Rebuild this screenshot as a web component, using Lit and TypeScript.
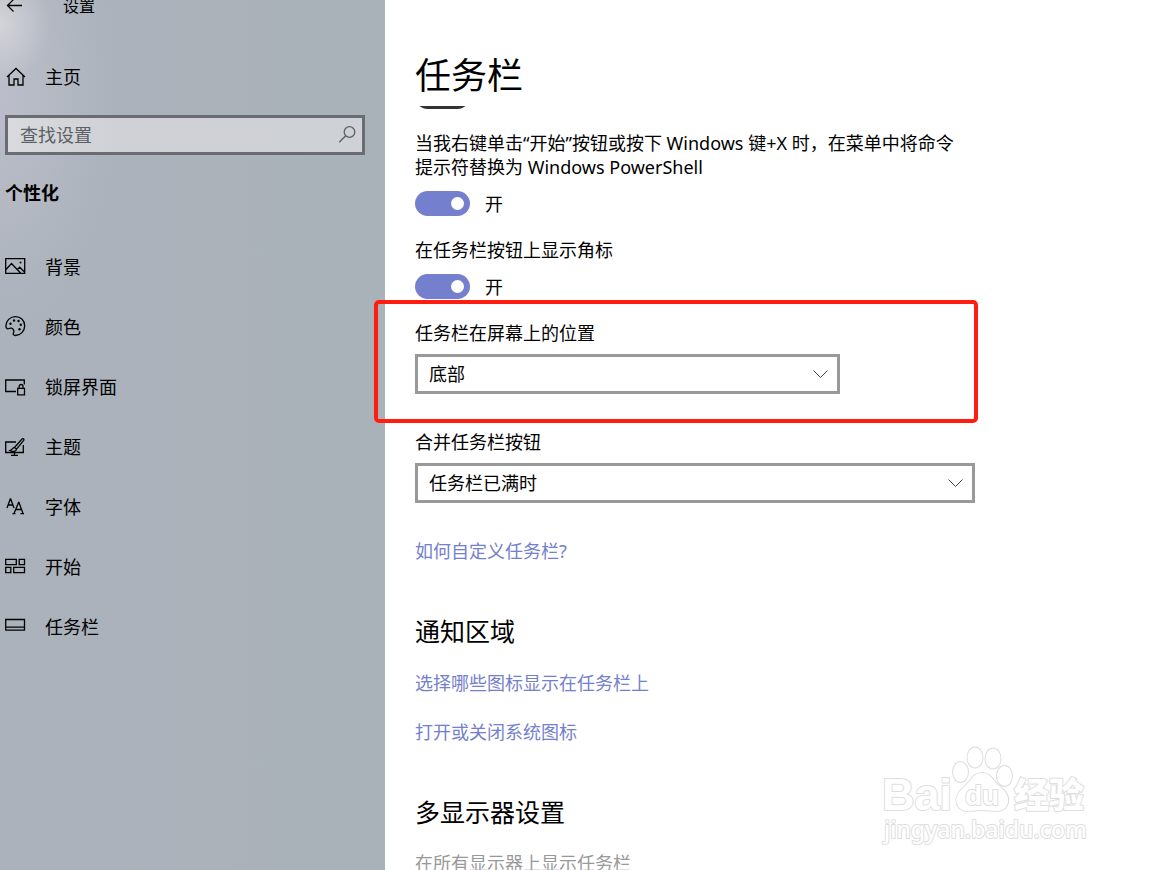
import { LitElement, html, css, svg, nothing } from "lit";
import { customElement, property } from "lit/decorators.js";

const icons: Record<string, unknown> = {
  back: svg`<path d="M2.500 10.500H17M8.500 4.500 2.500 10.500l6 6" />`,
  home: svg`<path d="M2 11 11 2.500 20 11M4 9.500V19H9V13H13V19H18V9.500" />`,
  picture: svg`<path d="M.7 2.700H19.700V17.300H.7ZM1 13.500 6.500 7.500 15.500 17M12.500 13.500 14.700 11.200 19.500 16" /><circle cx="15.500" cy="6.500" r=".4" />`,
  palette: svg`<path d="M1 10.500C.5 4.500 5.500 .7 10.500 .7 15.800 .7 19.700 4.500 19.700 9.700 19.700 15 15.500 19.500 10.500 19.500 8.500 19.500 7.800 18.300 8.500 16.800 9.200 15 8.500 13 6.500 12.200 4.500 11.600 3.500 13.300 2.200 12.700 1.400 12.300 1 11.500 1 10.500Z" /><g class="dots"><circle cx="5.500" cy="7.800" r="1.200" /><circle cx="9" cy="4.500" r="1.200" /><circle cx="13.500" cy="5" r="1.200" /><circle cx="15.800" cy="8.800" r="1.200" /><circle cx="14.500" cy="13.300" r="1.200" /></g>`,
  lock: svg`<path d="M11 15.500H.7V4H19.300V8.500M12.700 12.300H19.500V18.900H12.700ZM14.200 12V10.400A1.900 1.900 0 0 1 18 10.400V12" />`,
  theme: svg`<path d="M11 6H.7V16.500H18.300V9M9.500 16.500V19.300M6 19.300H13M9.500 11.500 17 3C18 2 19.500 3.200 18.700 4.400L11.500 13.200ZM9.500 11.500C7.500 11.300 7.300 14 5 14.500 7.500 16 11.200 15.800 11.500 13.200" />`,
  fonts: svg`<path d="M2 12 5.300 3H5.700L9 12M3.300 9H7.800M9 17.500 13.600 6.500H14L18 17.500M10.700 13.500H16.500M7.500 17.700H10.500M15.500 17.700H19" />`,
  start: svg`<path d="M.7 3.300H11.300V8.600H.7ZM14.200 3.300H19.500V8.600H14.200ZM.7 11.400H5.800V16.600H.7ZM8.700 11.400H19.500V16.600H8.700Z" />`,
  taskbar: svg`<path d="M.7 3.500H19.500V14.200H.7ZM.7 11.200H19.500" />`,
  search: svg`<circle cx="12.500" cy="8" r="5.300" /><path d="M8.700 11.800 2.200 18.300" />`,
};

@customElement("ui-icon")
class UiIcon extends LitElement {
  @property() name = "home";
  static styles = css`
    :host { display: block; flex: none; width: 22px; height: 22px; }
    svg { display: block; width: 100%; height: 100%; fill: none; stroke: currentColor; stroke-width: 1.3; }
    .dots { fill: currentColor; stroke: none; }
  `;
  render() {
    return html`<svg viewBox="0 0 22 22" aria-hidden="true">${icons[this.name]}</svg>`;
  }
}

@customElement("drop-down")
class DropDown extends LitElement {
  @property() label = "";
  @property({ type: Array }) options: string[] = [];
  static styles = css`
    :host { display: block; }
    label { display: block; margin-bottom: 9px; line-height: 24px; }
    .field { display: grid; align-items: center; }
    select, svg { grid-area: 1 / 1; }
    select {
      appearance: none; width: 100%; height: 40px; margin: 0; padding: 0 11px;
      border: 3px solid #999; border-radius: 0; background: #fff; color: #000; font: inherit;
    }
    svg { justify-self: end; margin-right: 11px; width: 17px; height: 10px; fill: none; stroke: #444; stroke-width: 1; pointer-events: none; }
  `;
  render() {
    return html`
      <label for="s">${this.label}</label>
      <div class="field">
        <select id="s">${this.options.map((o) => html`<option>${o}</option>`)}</select>
        <svg viewBox="0 0 17 10" aria-hidden="true"><path d="M1.500 1.500 8.500 8.500 15.500 1.500" /></svg>
      </div>`;
  }
}

@customElement("toggle-row")
class ToggleRow extends LitElement {
  @property() label = "";
  @property({ type: Boolean }) on = false;
  @property({ type: Boolean }) bare = false;
  static styles = css`
    :host { display: block; }
    .label { display: block; margin-bottom: 12px; padding-right: 15px; line-height: 24px; }
    .row { display: flex; align-items: center; gap: 15px; height: 25px; }
    input {
      appearance: none; display: flex; align-items: center; box-sizing: border-box; flex: none;
      width: 55px; height: 25px; margin: 0; padding: 0 6px; border: 3px solid #333; border-radius: 13px; background: #fff;
    }
    input::before { content: ""; width: 13px; height: 13px; border-radius: 50%; background: #333; }
    input:checked { justify-content: flex-end; border: 0; background: #7480cd; }
    input:checked::before { background: #fff; }
  `;
  render() {
    return html`
      ${this.bare ? nothing : html`<label class="label" for="t">${this.label}</label>`}
      <div class="row">
        <input id="t" type="checkbox" role="switch" aria-label=${this.bare ? "开关" : nothing} .checked=${this.on}
          @change=${(e: Event) => (this.on = (e.target as HTMLInputElement).checked)} />
        ${this.bare ? nothing : html`<span>${this.on ? "开" : "关"}</span>`}
      </div>`;
  }
}

@customElement("baidu-mark")
class BaiduMark extends LitElement {
  static styles = css`
    :host { display: block; }
    svg { display: block; width: 230px; height: 115px; overflow: visible; fill: #fff; stroke: #dedede; stroke-width: 2; paint-order: stroke; stroke-linejoin: round; }
    .brand { font: bold 45px "Liberation Sans", sans-serif; }
    .du { font: bold 28px "Liberation Sans", sans-serif; }
    .cn { font: 900 35px "Noto Sans CJK SC", sans-serif; }
    .site { font: 500 23px "Noto Sans", sans-serif; }
  `;
  render() {
    return html`
      <svg viewBox="0 0 230 115" role="img" aria-label="Baidu">
        <ellipse cx="90.500" cy="37" rx="7.500" ry="10" />
        <ellipse cx="105" cy="22.500" rx="7.500" ry="10" />
        <ellipse cx="123" cy="23.500" rx="7.500" ry="10" />
        <ellipse cx="134.500" cy="41" rx="7.500" ry="10" />
        <path d="M112 38C121 38 123 46 129 51 137 57 140 64 137 70 133 79 122 75 112 75 102 75 93 79 88 71 84 63 88 57 95 51 101 46 103 38 112 38Z" />
        <text class="brand" x="12" y="75">Bai</text>
        <text class="du" x="95" y="70">du</text>
        <text class="cn" x="144" y="73">经验</text>
        <text class="site" x="14" y="103">jingyan.baidu.com</text>
      </svg>`;
  }
}

@customElement("app-root")
class AppRoot extends LitElement {
  private nav = [
    ["picture", "背景"], ["palette", "颜色"], ["lock", "锁屏界面"], ["theme", "主题"],
    ["fonts", "字体"], ["start", "开始"], ["taskbar", "任务栏"],
  ];
  static styles = css`
    :host {
      display: grid; grid-template-columns: 385px 1fr; position: relative; height: 100vh; overflow: hidden;
      background: #fff; color: #000; font: 18px/24px "Noto Sans", "Noto Sans CJK SC", sans-serif;
    }
    * { box-sizing: border-box; }
    h1, h2, p { margin: 0; font-weight: 400; }
    a { color: inherit; text-decoration: none; }
    .side {
      padding: 0 20px 0 5px;
      background:
        radial-gradient(ellipse 50px 60px at 0 24px, #d2d4d8 0, #d2d4d800 100%),
        radial-gradient(ellipse 120px 240px at 0 90px, #bbbeca 0, #bbbeca00 100%),
        linear-gradient(90deg, #abb2bb, #a9b1b9);
    }
    .bar { display: flex; align-items: center; gap: 36px; margin-top: -6px; font-size: 16px; }
    .back { padding: 0; border: 0; background: none; color: inherit; }
    .item { display: flex; align-items: center; gap: 18px; height: 60px; }
    .home { margin-top: 29px; }
    .search {
      display: flex; align-items: center; height: 40px; margin-top: 8px; padding: 0 3px 0 12px;
      border: 3px solid #6a6c72; background: linear-gradient(90deg, #d8dadd, #cfd1d6 30%, #ced1d6); color: #5c5f64;
    }
    .search input { flex: 1; min-width: 0; padding: 0; border: 0; outline: 0; background: none; font: inherit; }
    .search input::placeholder { color: #5c5f64; opacity: 1; }
    .side h2 { margin: 26px 0 32px; font-size: 18px; font-weight: 700; }
    .main { padding: 0 30px; }
    .title { position: relative; z-index: 1; padding: 52px 0 6px; background: #fff; }
    .title h1 { font-size: 36px; line-height: 48px; }
    .content { display: flex; flex-direction: column; max-width: 560px; }
    .under { margin-top: -22px; }
    .text, .toggle { margin-top: 22px; }
    .marked { position: relative; margin-top: 22px; }
    .short { max-width: 425px; }
    .frame { position: absolute; inset: -21px -3px -29px -41px; border: 4px solid #ff1d12; border-radius: 5px; pointer-events: none; }
    .merge { margin-top: 36px; }
    .link { align-self: flex-start; color: #7480cd; }
    .how { margin-top: 36px; }
    .content h2 { margin-top: 52px; font-size: 25px; line-height: 32px; }
    .pick { margin-top: 24px; }
    .sys { margin-top: 25px; }
    .off { margin-top: 23px; color: #999; }
    .mark { position: absolute; right: 51px; bottom: 20px; }
  `;
  render() {
    return html`
      <aside class="side">
        <div class="bar"><button class="back" aria-label="返回"><ui-icon name="back"></ui-icon></button><span>设置</span></div>
        <a class="item home" href="#"><ui-icon name="home"></ui-icon>主页</a>
        <label class="search"><input type="text" placeholder="查找设置" aria-label="查找设置" /><ui-icon name="search"></ui-icon></label>
        <h2>个性化</h2>
        <nav>${this.nav.map(([i, t]) => html`<a class="item" href="#"><ui-icon name=${i}></ui-icon>${t}</a>`)}</nav>
      </aside>
      <main class="main">
        <header class="title"><h1>任务栏</h1></header>
        <div class="content">
          <toggle-row class="under" bare></toggle-row>
          <toggle-row class="text" on label="当我右键单击“开始”按钮或按下 Windows 键+X 时，在菜单中将命令提示符替换为 Windows PowerShell"></toggle-row>
          <toggle-row class="toggle" on label="在任务栏按钮上显示角标"></toggle-row>
          <div class="marked">
            <drop-down class="short" label="任务栏在屏幕上的位置" .options=${["底部", "顶部", "靠左", "靠右"]}></drop-down>
            <div class="frame"></div>
          </div>
          <drop-down class="merge" label="合并任务栏按钮" .options=${["任务栏已满时", "始终合并按钮", "从不"]}></drop-down>
          <a class="link how" href="#">如何自定义任务栏?</a>
          <h2>通知区域</h2>
          <a class="link pick" href="#">选择哪些图标显示在任务栏上</a>
          <a class="link sys" href="#">打开或关闭系统图标</a>
          <h2>多显示器设置</h2>
          <p class="off">在所有显示器上显示任务栏</p>
        </div>
      </main>
      <baidu-mark class="mark"></baidu-mark>`;
  }
}
